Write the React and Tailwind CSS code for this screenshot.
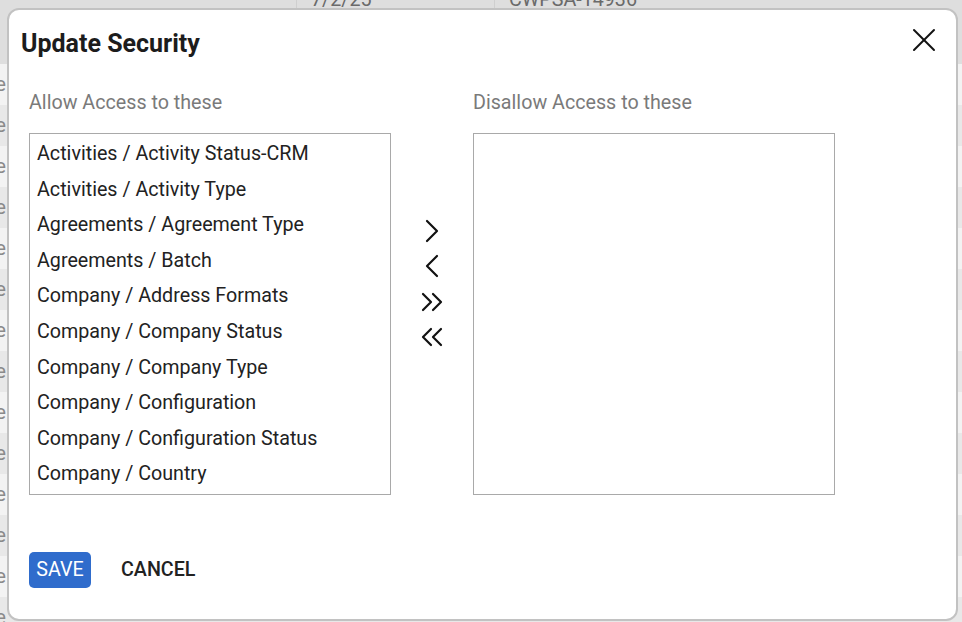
import React from "react";

const items = [
  "Activities / Activity Status-CRM",
  "Activities / Activity Type",
  "Agreements / Agreement Type",
  "Agreements / Batch",
  "Company / Address Formats",
  "Company / Company Status",
  "Company / Company Type",
  "Company / Configuration",
  "Company / Configuration Status",
  "Company / Country",
];

function Chevron({ dir = "right", double = false }) {
  if (double) {
    const pts =
      dir === "right"
        ? ["2,2 10,10 2,18", "12,2 20,10 12,18"]
        : ["10,2 2,10 10,18", "20,2 12,10 20,18"];
    return (
      <svg width="22" height="20" viewBox="0 0 22 20" fill="none" stroke="#111" strokeWidth="2.2" strokeLinecap="round" strokeLinejoin="round">
        {pts.map((p) => (
          <polyline key={p} points={p} />
        ))}
      </svg>
    );
  }
  const p = dir === "right" ? "2,2 12,12 2,22" : "12,2 2,12 12,22";
  return (
    <svg width="14" height="24" viewBox="0 0 14 24" fill="none" stroke="#111" strokeWidth="2.2" strokeLinecap="round" strokeLinejoin="round">
      <polyline points={p} />
    </svg>
  );
}

export default function App() {
  const rows = Array.from({ length: 14 });
  return (
    <div
      className="relative w-[962px] h-[622px] overflow-hidden bg-[#e2e2e2]"
      style={{ fontFamily: "Roboto, 'Liberation Sans', sans-serif" }}
    >
      {/* background page */}
      <div className="flex flex-col">
        <div className="flex h-[64px] bg-[#dedede] text-[19.7px] text-[#6a6a6a]">
          <div className="w-[297px] border-r border-[#cfcfcf]" />
          <div className="w-[198px] border-r border-[#cfcfcf] pl-[14px] -mt-[15px]">7/2/25</div>
          <div className="flex-1 pl-[14px] -mt-[15px]">CWPSA-14936</div>
        </div>
        {rows.map((_, i) => (
          <div
            key={i}
            className={`flex h-[41px] items-center text-[19.7px] text-[#8a8a8a] ${i % 2 === 0 ? "bg-[#f3f3f3]" : "bg-[#e8e8e8]"}`}
          >
            <div className="flex w-[6px] justify-end whitespace-nowrap">Type</div>
          </div>
        ))}
      </div>

      {/* modal */}
      <div className="absolute left-[7px] top-[8px] w-[951px] h-[613px] rounded-[12px] border-2 border-[#c2c2c2] bg-white flex flex-col">
        <div className="flex items-start justify-between pl-[12px] pr-[20px] pt-[17px]">
          <h1 className="text-[25px] font-bold text-[#1c1c1c] leading-[34px]">Update Security</h1>
          <button className="mt-[1px]">
            <svg width="24" height="24" viewBox="0 0 24 24" fill="none" stroke="#111" strokeWidth="2" strokeLinecap="round">
              <line x1="2" y1="2" x2="22" y2="22" />
              <line x1="22" y1="2" x2="2" y2="22" />
            </svg>
          </button>
        </div>

        <div className="flex pl-[20px] mt-[30px]">
          <div className="flex flex-col w-[362px]">
            <div className="text-[19.7px] text-[#7a7a7a] leading-[24px]">Allow Access to these</div>
            <div className="mt-[18px] h-[362px] border border-[#a9a9a9] pt-[2px] px-[7px]">
              {items.map((t) => (
                <div key={t} className="h-[35.6px] flex items-center text-[19.7px] text-[#222] whitespace-nowrap">
                  {t}
                </div>
              ))}
            </div>
          </div>

          <div className="w-[82px] flex flex-col items-center pt-[122px]">
            <div className="h-[35.5px] flex items-center justify-center"><Chevron dir="right" /></div>
            <div className="h-[35.5px] flex items-center justify-center"><Chevron dir="left" /></div>
            <div className="h-[35.5px] flex items-center justify-center"><Chevron dir="right" double /></div>
            <div className="h-[35.5px] flex items-center justify-center"><Chevron dir="left" double /></div>
          </div>

          <div className="flex flex-col w-[362px]">
            <div className="text-[19.7px] text-[#7a7a7a] leading-[24px]">Disallow Access to these</div>
            <div className="mt-[18px] h-[362px] border border-[#a9a9a9]" />
          </div>
        </div>

        <div className="flex items-center pl-[20px] mt-[57px] gap-[30px]">
          <button className="h-[36px] w-[62px] rounded-[5px] bg-[#2f6ccc] text-white text-[19.7px] leading-none">SAVE</button>
          <button className="text-[19.7px] font-medium text-[#222] leading-none">CANCEL</button>
        </div>
      </div>
    </div>
  );
}
